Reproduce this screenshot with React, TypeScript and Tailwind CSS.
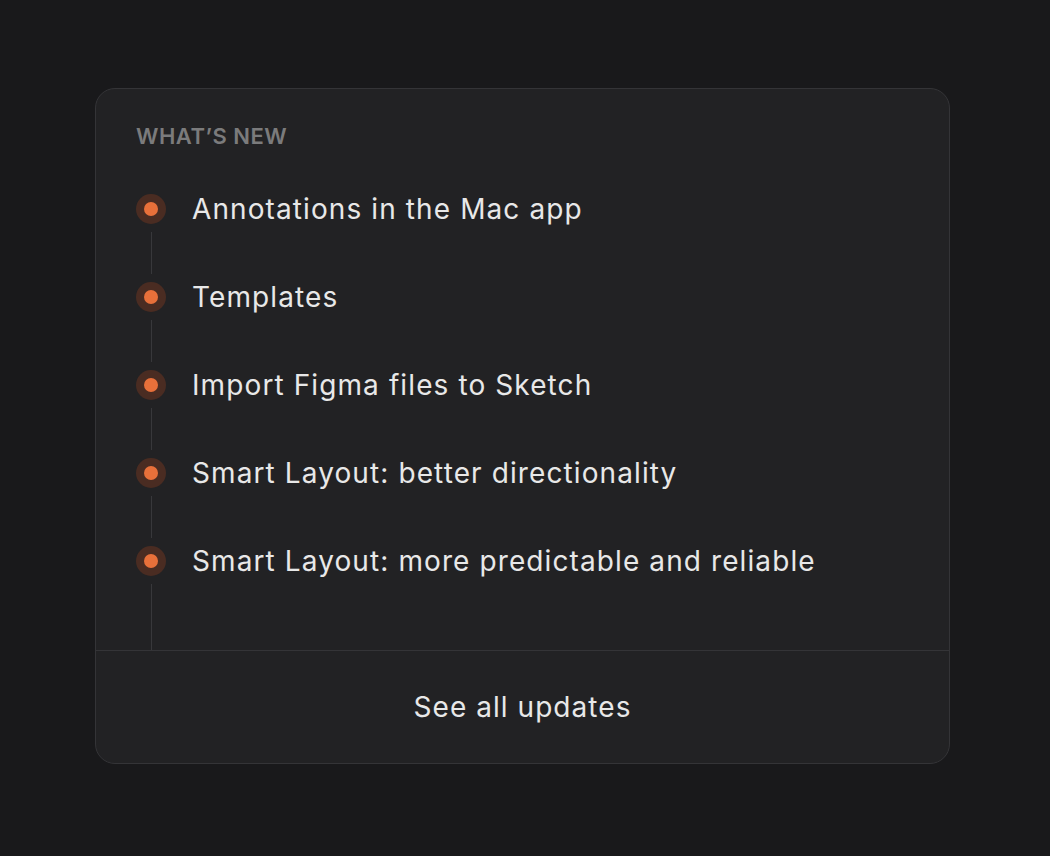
const updates = [
  "Annotations in the Mac app",
  "Templates",
  "Import Figma files to Sketch",
  "Smart Layout: better directionality",
  "Smart Layout: more predictable and reliable",
];

function Dot() {
  return (
    <div className="flex size-[30px] shrink-0 items-center justify-center rounded-full bg-[#4a2c22]">
      <div className="size-[14px] rounded-full bg-[#e8703a]" />
    </div>
  );
}

export default function App() {
  return (
    <div
      className="min-h-[856px] w-full bg-[#19191b] pt-[88px] pl-[95px]"
      style={{ fontFamily: "Inter, 'Noto Sans', sans-serif" }}
    >
      <div className="flex h-[676px] w-[855px] flex-col rounded-[20px] border border-[#343437] bg-[#222224]">
        <div className="flex h-[561px] flex-col pt-[33px] pl-[40px]">
          <div className="text-[22px] leading-[28px] font-semibold tracking-[0.5px] text-[#7b7b7c]">
            WHAT’S NEW
          </div>
          <div className="mt-[44px] flex flex-1 flex-col">
            {updates.map((u, i) => {
              const last = i === updates.length - 1;
              return (
                <div key={u} className={last ? "flex flex-1 gap-[26px]" : "flex h-[88px] gap-[26px]"}>
                  <div className="flex w-[30px] flex-col items-center">
                    <Dot />
                    <div className={last ? "mt-[8px] w-px flex-1 bg-[#38383b]" : "my-[8px] w-px flex-1 bg-[#38383b]"} />
                  </div>
                  <div className="h-[30px] text-[28px] leading-[30px] tracking-[1.1px] text-[#e8e8e8]">{u}</div>
                </div>
              );
            })}
          </div>
        </div>
        <div className="flex flex-1 items-center justify-center border-t border-[#343437] text-[28px] tracking-[1.05px] text-[#e8e8e8]">
          See all updates
        </div>
      </div>
    </div>
  );
}
